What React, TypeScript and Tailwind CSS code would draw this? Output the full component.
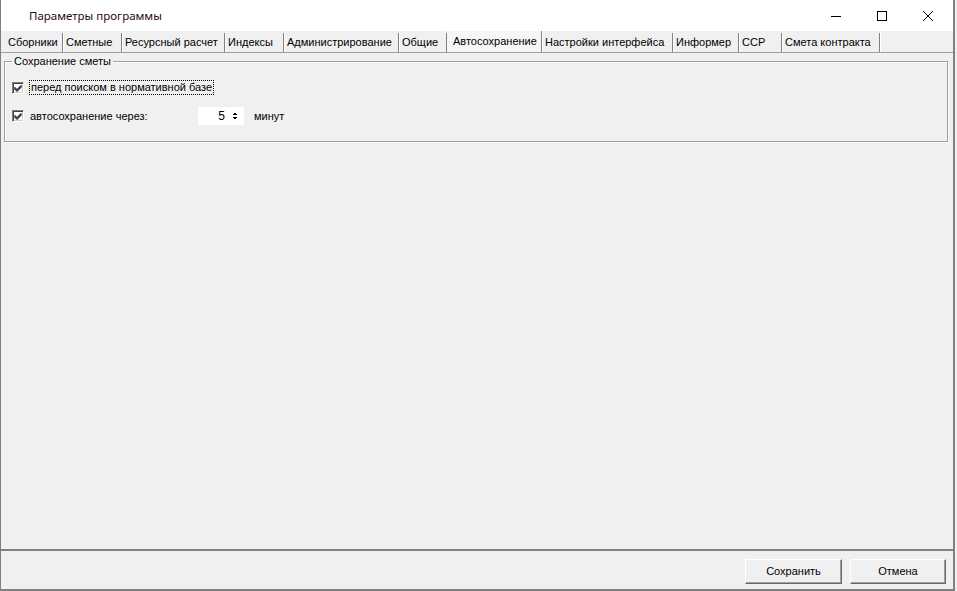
import React from "react";

const tabs: [string, number][] = [
  ["Сборники", 58],
  ["Сметные", 59],
  ["Ресурсный расчет", 103],
  ["Индексы", 59],
  ["Администрирование", 115],
  ["Общие", 48],
  ["Автосохранение", 95],
  ["Настройки интерфейса", 131],
  ["Информер", 66],
  ["ССР", 43],
  ["Смета контракта", 98],
];

const ACTIVE = "Автосохранение";

function Check({ checked }: { checked: boolean }) {
  return (
    <span className="w-[12px] h-[12px] shrink-0 bg-white border border-t-[#808080] border-l-[#808080] border-r-white border-b-white shadow-[inset_1px_1px_0_#404040,inset_-1px_-1px_0_#d4d0c8] flex items-center justify-center">
      {checked && (
        <svg width="8" height="8" viewBox="0 0 8 8">
          <path d="M0.5 3 L3 5.5 L7.5 1 M0.5 4 L3 6.5 L7.5 2 M0.5 5 L3 7.5 L7.5 3" stroke="#000" strokeWidth="1" fill="none" />
        </svg>
      )}
    </span>
  );
}

export default function App() {
  return (
    <div className="w-[957px] h-[591px] bg-[#f0f0f0] overflow-hidden font-['Liberation_Sans',Arial,sans-serif] text-[11px] text-black">
      <div className="w-[955px] h-[591px] flex flex-col border-l border-r-2 border-b-2 border-[#808080]">
        {/* title bar */}
        <div className="h-[31px] bg-white flex items-center shrink-0">
          <span className="ml-[28px] text-[11.5px] text-[#2a0a14] font-['Noto_Sans',sans-serif]">Параметры программы</span>
          <div className="ml-auto flex h-full">
            <div className="w-[46px] flex items-center justify-center">
              <svg width="10" height="10" viewBox="0 0 10 10"><path d="M0 5.5 H10" stroke="#000" strokeWidth="1" /></svg>
            </div>
            <div className="w-[46px] flex items-center justify-center">
              <svg width="10" height="10" viewBox="0 0 10 10"><rect x="0.5" y="0.5" width="9" height="9" stroke="#000" fill="none" /></svg>
            </div>
            <div className="w-[46px] flex items-center justify-center mr-[2px]">
              <svg width="10" height="10" viewBox="0 0 10 10"><path d="M0 0 L10 10 M10 0 L0 10" stroke="#000" strokeWidth="1" /></svg>
            </div>
          </div>
        </div>

        {/* tab strip */}
        <div className="h-[21px] flex items-end pl-[4px] shrink-0">
          {tabs.map(([t, w]) => (
            <div
              key={t}
              style={{ width: w }}
              className={
                t === ACTIVE
                  ? "h-[21px] pl-[6px] flex items-start pt-[2px] bg-[#f6f6f6] border-r border-[#808080] shadow-[1px_0_0_#fff]"
                  : "h-[19px] pl-[3px] flex items-center border-r border-[#808080] shadow-[1px_0_0_#fff] whitespace-nowrap"
              }
            >
              {t}
            </div>
          ))}
        </div>

        {/* page */}
        <div className="flex-1 border-t border-[#a0a0a0] pl-[3px] pr-[5px] pt-[1px]">
          <fieldset className="border border-[#a0a0a0] shadow-[1px_1px_0_#fff,inset_1px_1px_0_#fff] h-[88px] pl-[7px]">
            <legend className="px-[2px] leading-[14px]">Сохранение сметы</legend>
            <div className="mt-[12px] flex items-center h-[15px]">
              <Check checked />
              <span className="ml-[5px] px-[1px] border border-dotted border-black leading-[13px]">перед поиском в нормативной базе</span>
            </div>
            <div className="mt-[12px] flex items-center h-[18px]">
              <Check checked />
              <span className="ml-[6px] w-[168px]">автосохранение через:</span>
              <div className="w-[46px] h-[18px] bg-white flex items-center">
                <span className="flex-1 text-right pr-[5px] text-[12px]">5</span>
                <svg width="10" height="14" viewBox="0 0 10 14" className="mr-[4px]">
                  <path d="M4 4.5 H6 M3 5.5 H7" stroke="#000" strokeWidth="1" />
                  <path d="M3 8.5 H7 M4 9.5 H6" stroke="#000" strokeWidth="1" />
                </svg>
              </div>
              <span className="ml-[10px]">минут</span>
            </div>
          </fieldset>
        </div>

        {/* button bar */}
        <div className="h-[40px] shrink-0 border-t-2 border-[#808080] flex items-start justify-end gap-[8px] pt-[8px] pr-[7px]">
          <button className="w-[97px] h-[25px] bg-[#f0f0f0] border border-t-white border-l-white border-r-[#696969] border-b-[#696969] shadow-[inset_-1px_-1px_0_#a0a0a0]">
            Сохранить
          </button>
          <button className="w-[96px] h-[25px] bg-[#f0f0f0] border border-t-white border-l-white border-r-[#696969] border-b-[#696969] shadow-[inset_-1px_-1px_0_#a0a0a0]">
            Отмена
          </button>
        </div>
      </div>
    </div>
  );
}
